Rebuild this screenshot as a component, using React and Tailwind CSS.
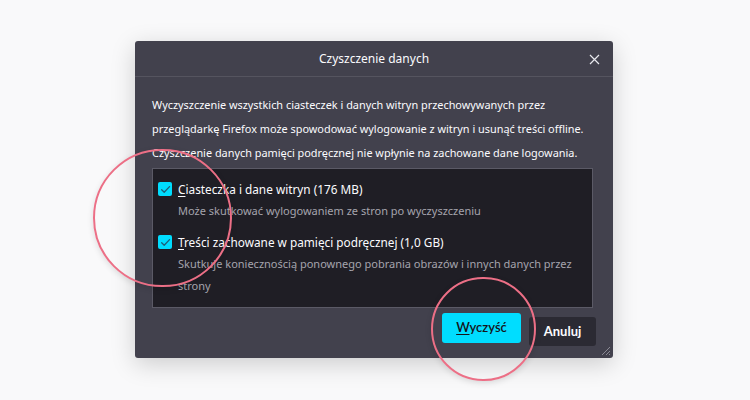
const Check = () => (
  <span className="flex h-[14px] w-[14px] shrink-0 items-center justify-center rounded-[2px] bg-[#00ddff]">
    <svg width="11" height="11" viewBox="0 0 12 12" fill="none">
      <path d="M1.8 6.2 4.6 9 10.4 2.8" stroke="#1d5f78" strokeWidth="1.4" strokeLinecap="round" strokeLinejoin="round" />
    </svg>
  </span>
)

const Option = ({ accent, rest, desc }) => (
  <div className="flex gap-[6px]">
    <div className="pt-[3px]">
      <Check />
    </div>
    <div>
      <div className="text-[11.8px] leading-[20px] text-[#fbfbfe]">
        <span className="underline underline-offset-2">{accent}</span>
        {rest}
      </div>
      <div className="mt-[1px] text-[11px] leading-[22px] text-[#a5a4ad]">{desc}</div>
    </div>
  </div>
)

const App = () => {
  return (
    <div className="relative h-[400px] w-[750px] overflow-hidden bg-[#f9f9fa] pl-[135px] pt-[41px] font-['Noto_Sans',sans-serif]">
      <div className="relative flex h-[317px] w-[478px] flex-col rounded-[3px] bg-[#42414d] shadow-[0_6px_24px_rgba(0,0,0,0.18)]">
        <div className="relative flex h-[36px] shrink-0 items-center justify-center border-b border-[#55545f]">
          <span className="text-[12px] text-[#fbfbfe]">Czyszczenie danych</span>
          <svg className="absolute right-[13px] top-[13px]" width="11" height="11" viewBox="0 0 11 11">
            <path d="M1 1 10 10M10 1 1 10" stroke="#e8e8ee" strokeWidth="1.2" />
          </svg>
        </div>
        <div className="px-[17px] pt-[16px]">
          <p className="whitespace-nowrap text-[10.9px] leading-[24px] text-[#fbfbfe]">
            Wyczyszczenie wszystkich ciasteczek i danych witryn przechowywanych przez
            <br />
            przeglądarkę Firefox może spowodować wylogowanie z witryn i usunąć treści offline.
            <br />
            Czyszczenie danych pamięci podręcznej nie wpłynie na zachowane dane logowania.
          </p>
          <div className="mt-[3px] flex h-[140px] w-[441px] flex-col gap-[10px] border border-[#5b5a66] bg-[#1f1e25] pl-[5px] pr-[10px] pt-[10px]">
            <Option accent="C" rest="iasteczka i dane witryn (176 MB)" desc="Może skutkować wylogowaniem ze stron po wyczyszczeniu" />
            <Option
              accent="T"
              rest="reści zachowane w pamięci podręcznej (1,0 GB)"
              desc="Skutkuje koniecznością ponownego pobrania obrazów i innych danych przez strony"
            />
          </div>
          <div className="mt-[5px] flex items-start justify-end gap-[8px] font-['Lato',sans-serif]">
            <button className="h-[30px] w-[79px] rounded-[3px] bg-[#00ddff] text-[13px] font-semibold text-[#15141a]">
              <span className="underline underline-offset-2">W</span>yczyść
            </button>
            <button className="mt-[4px] h-[29px] w-[67px] rounded-[3px] bg-[#2b2a33] text-[13px] font-bold text-[#fbfbfe]">
              Anuluj
            </button>
          </div>
        </div>
        <svg className="absolute bottom-[2px] right-[2px]" width="12" height="12" viewBox="0 0 12 12">
          <path d="M11 3 3 11M11 7 7 11M11 10 10 11" stroke="#8a8994" strokeWidth="1" />
        </svg>
      </div>
      <div className="absolute left-[93px] top-[149px] h-[138px] w-[139px] rounded-full border-[2.5px] border-[#ec6f86] shadow-[0_2px_6px_rgba(0,0,0,0.12)]" />
      <div className="absolute left-[431px] top-[277px] h-[104px] w-[105px] rounded-full border-[2.5px] border-[#ec6f86] shadow-[0_2px_6px_rgba(0,0,0,0.12)]" />
    </div>
  )
}

export default App
